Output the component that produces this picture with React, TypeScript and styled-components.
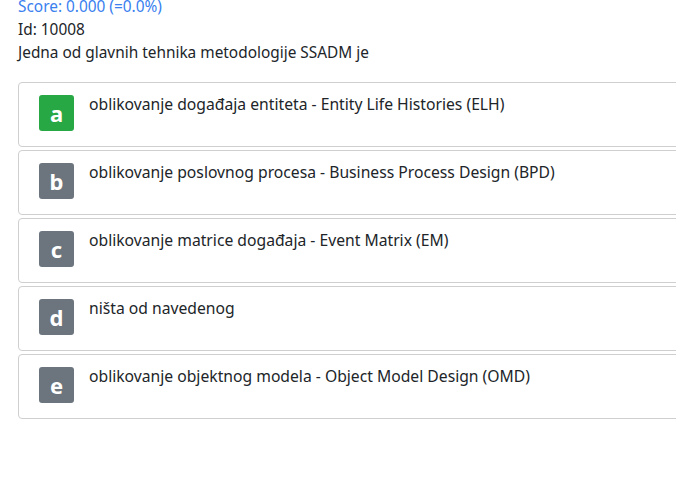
import React from 'react'
import styled, { createGlobalStyle } from 'styled-components'

const GlobalStyle = createGlobalStyle`
  body {
    margin: 0;
    overflow: hidden;
    background: #fff;
    font-family: 'Noto Sans', 'Open Sans', sans-serif;
    color: #212529;
  }
`

type Answer = { letter: string; text: string; correct?: boolean }

const answers: Answer[] = [
  { letter: 'a', text: 'oblikovanje događaja entiteta - Entity Life Histories (ELH)', correct: true },
  { letter: 'b', text: 'oblikovanje poslovnog procesa - Business Process Design (BPD)' },
  { letter: 'c', text: 'oblikovanje matrice događaja - Event Matrix (EM)' },
  { letter: 'd', text: 'ništa od navedenog' },
  { letter: 'e', text: 'oblikovanje objektnog modela - Object Model Design (OMD)' },
]

const Page_ = styled.div({
  width: '700px',
  padding: '0 0 0 18px',
  marginTop: '-5px',
  boxSizing: 'border-box',
})

const Score_ = styled.div({
  color: '#3a80ef',
  fontSize: '15.4px',
  lineHeight: '23px',
})

const Line_ = styled.div({
  fontSize: '15.4px',
  lineHeight: '23px',
})

const List_ = styled.div({
  marginTop: '18px',
  display: 'flex',
  flexDirection: 'column',
  gap: '3px',
})

const Card_ = styled.div({
  border: '1px solid #cfcfcf',
  borderRadius: '4px',
  height: '65px',
  boxSizing: 'border-box',
  padding: '12px 20px',
  display: 'flex',
  alignItems: 'flex-start',
})

const Badge_ = styled.div<{ $correct?: boolean }>(({ $correct }) => ({
  width: '35px',
  height: '36px',
  borderRadius: '3px',
  backgroundColor: $correct ? '#28a745' : '#6c757d',
  color: '#fff',
  fontWeight: 700,
  fontSize: '22px',
  display: 'flex',
  alignItems: 'center',
  justifyContent: 'center',
  flexShrink: 0,
}))

const AnswerText_ = styled.div({
  marginLeft: '15px',
  fontSize: '15.7px',
  lineHeight: '18px',
})

export default function App() {
  return (
    <>
      <GlobalStyle />
      <Page_>
        <Score_>Score: 0.000 (=0.0%)</Score_>
        <Line_>Id: 10008</Line_>
        <Line_>Jedna od glavnih tehnika metodologije SSADM je</Line_>
        <List_>
          {answers.map((a) => (
            <Card_ key={a.letter}>
              <Badge_ $correct={a.correct}>{a.letter}</Badge_>
              <AnswerText_>{a.text}</AnswerText_>
            </Card_>
          ))}
        </List_>
      </Page_>
    </>
  )
}
